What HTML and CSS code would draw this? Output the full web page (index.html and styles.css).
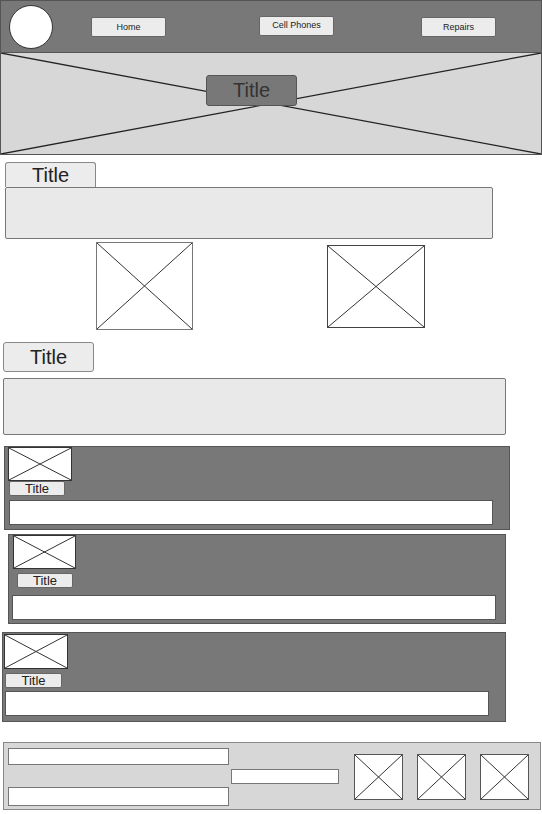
FILE: index.html
```html
<!DOCTYPE html>
<html lang="en">
<head>
    <meta charset="UTF-8">
    <meta name="viewport" content="width=device-width, initial-scale=1.0">
    <title>Phone Shop Wireframe</title>
    <link rel="stylesheet" href="styles.css">
</head>
<body>
    <header class="topbar">
        <div class="logo"></div>
        <a class="nav-btn nav-home">Home</a>
        <a class="nav-btn nav-phones">Cell Phones</a>
        <a class="nav-btn nav-repairs">Repairs</a>
    </header>

    <div class="hero">
        <svg class="cross" viewBox="0 0 100 100" preserveAspectRatio="none">
            <line x1="0" y1="0" x2="100" y2="100" vector-effect="non-scaling-stroke"/>
            <line x1="0" y1="100" x2="100" y2="0" vector-effect="non-scaling-stroke"/>
        </svg>
        <div class="hero-title">Title</div>
    </div>

    <section class="intro">
        <div class="tab">Title</div>
        <div class="panel panel-intro"></div>
        <div class="gallery">
            <div class="ph gallery-one">
                <svg viewBox="0 0 100 100" preserveAspectRatio="none"><line x1="0" y1="0" x2="100" y2="100" vector-effect="non-scaling-stroke"/><line x1="0" y1="100" x2="100" y2="0" vector-effect="non-scaling-stroke"/></svg>
            </div>
            <div class="ph gallery-two">
                <svg viewBox="0 0 100 100" preserveAspectRatio="none"><line x1="0" y1="0" x2="100" y2="100" vector-effect="non-scaling-stroke"/><line x1="0" y1="100" x2="100" y2="0" vector-effect="non-scaling-stroke"/></svg>
            </div>
        </div>
    </section>

    <section class="listing">
        <div class="title-btn">Title</div>
        <div class="panel panel-listing"></div>

        <div class="card card-one">
            <div class="ph card-img">
                <svg viewBox="0 0 100 100" preserveAspectRatio="none"><line x1="0" y1="0" x2="100" y2="100" vector-effect="non-scaling-stroke"/><line x1="0" y1="100" x2="100" y2="0" vector-effect="non-scaling-stroke"/></svg>
            </div>
            <div class="card-title">Title</div>
            <div class="card-text"></div>
        </div>

        <div class="card card-two">
            <div class="ph card-img">
                <svg viewBox="0 0 100 100" preserveAspectRatio="none"><line x1="0" y1="0" x2="100" y2="100" vector-effect="non-scaling-stroke"/><line x1="0" y1="100" x2="100" y2="0" vector-effect="non-scaling-stroke"/></svg>
            </div>
            <div class="card-title">Title</div>
            <div class="card-text"></div>
        </div>

        <div class="card card-three">
            <div class="ph card-img">
                <svg viewBox="0 0 100 100" preserveAspectRatio="none"><line x1="0" y1="0" x2="100" y2="100" vector-effect="non-scaling-stroke"/><line x1="0" y1="100" x2="100" y2="0" vector-effect="non-scaling-stroke"/></svg>
            </div>
            <div class="card-title">Title</div>
            <div class="card-text"></div>
        </div>
    </section>

    <footer class="footer">
        <div class="footer-fields">
            <div class="field field-top"></div>
            <div class="field field-bottom"></div>
        </div>
        <div class="field field-mid"></div>
        <div class="footer-icons">
            <div class="ph icon">
                <svg viewBox="0 0 100 100" preserveAspectRatio="none"><line x1="0" y1="0" x2="100" y2="100" vector-effect="non-scaling-stroke"/><line x1="0" y1="100" x2="100" y2="0" vector-effect="non-scaling-stroke"/></svg>
            </div>
            <div class="ph icon">
                <svg viewBox="0 0 100 100" preserveAspectRatio="none"><line x1="0" y1="0" x2="100" y2="100" vector-effect="non-scaling-stroke"/><line x1="0" y1="100" x2="100" y2="0" vector-effect="non-scaling-stroke"/></svg>
            </div>
            <div class="ph icon">
                <svg viewBox="0 0 100 100" preserveAspectRatio="none"><line x1="0" y1="0" x2="100" y2="100" vector-effect="non-scaling-stroke"/><line x1="0" y1="100" x2="100" y2="0" vector-effect="non-scaling-stroke"/></svg>
            </div>
        </div>
    </footer>
</body>
</html>
```

FILE: styles.css
```css
* {
    box-sizing: border-box;
}
body {
    margin: 0;
    width: 542px;
    font-family: "Liberation Sans", Arial, sans-serif;
    color: #222;
    background: #fff;
}

/* header */
.topbar {
    display: flex;
    align-items: flex-start;
    height: 53px;
    background: #787878;
    border: 1px solid #555;
}
.logo {
    width: 44px;
    height: 44px;
    margin: 4px 0 0 8px;
    border-radius: 50%;
    background: #fff;
    border: 1px solid #333;
}
.nav-btn {
    display: flex;
    align-items: center;
    justify-content: center;
    width: 75px;
    height: 20px;
    background: #ececec;
    border: 1px solid #666;
    border-radius: 2px;
    font-size: 9px;
    color: #222;
}
.nav-home {
    margin: 16px 0 0 38px;
}
.nav-phones {
    margin: 15px 0 0 93px;
    padding-bottom: 2px;
}
.nav-repairs {
    margin: 16px 0 0 87px;
}

/* hero */
.hero {
    position: relative;
    height: 102px;
    background: #d7d7d7;
    border: 1px solid #555;
    border-top: none;
    padding: 22px 0 0 205px;
}
.cross {
    position: absolute;
    top: 0;
    left: 0;
    width: 100%;
    height: 100%;
}
.cross line {
    stroke: #222;
    stroke-width: 1.3;
}
.hero-title {
    position: relative;
    width: 91px;
    height: 31px;
    background: #787878;
    border: 1px solid #555;
    border-radius: 3px;
    font-size: 20px;
    line-height: 29px;
    text-align: center;
    color: #333;
}

/* placeholders */
.ph {
    background: #fff;
    border: 1px solid #444;
}
.ph svg {
    display: block;
    width: 100%;
    height: 100%;
}
.ph line {
    stroke: #333;
    stroke-width: 1;
}

/* intro */
.intro {
    margin-top: 7px;
    padding-left: 5px;
}
.tab {
    width: 91px;
    height: 25px;
    background: #ececec;
    border: 1px solid #888;
    border-bottom: none;
    border-radius: 3px 3px 0 0;
    font-size: 20px;
    line-height: 25px;
    text-align: center;
}
.panel {
    background: #e9e9e9;
    border: 1px solid #777;
    border-radius: 2px;
}
.panel-intro {
    width: 488px;
    height: 52px;
}
.gallery {
    display: flex;
    align-items: flex-start;
}
.gallery-one {
    width: 97px;
    height: 88px;
    margin: 3px 0 0 91px;
    border-color: #777;
}
.gallery-two {
    width: 98px;
    height: 83px;
    margin: 6px 0 0 134px;
}

/* listing */
.listing {
    margin-top: 12px;
}
.title-btn {
    width: 91px;
    height: 30px;
    margin-left: 3px;
    background: #ececec;
    border: 1px solid #888;
    border-radius: 3px;
    font-size: 20px;
    line-height: 29px;
    text-align: center;
}
.panel-listing {
    width: 503px;
    height: 57px;
    margin: 6px 0 0 3px;
}
.card {
    background: #787878;
    border: 1px solid #555;
}
.card-img {
    width: 64px;
    height: 34px;
    border-color: #333;
}
.card-title {
    width: 56px;
    height: 15px;
    background: #ececec;
    border: 1px solid #666;
    border-radius: 2px;
    font-size: 13px;
    line-height: 14px;
    text-align: center;
}
.card-text {
    height: 25px;
    background: #fff;
    border: 1px solid #555;
}
.card-one {
    width: 506px;
    height: 84px;
    margin: 11px 0 0 4px;
    padding: 0 0 0 3px;
}
.card-one .card-title {
    margin: 0 0 0 1px;
}
.card-one .card-text {
    width: 484px;
    margin: 4px 0 0 1px;
}
.card-two {
    width: 498px;
    height: 90px;
    margin: 4px 0 0 8px;
    padding: 0 0 0 4px;
}
.card-two .card-img {
    width: 63px;
}
.card-two .card-title {
    margin: 4px 0 0 4px;
}
.card-two .card-text {
    width: 484px;
    margin: 7px 0 0 -1px;
}
.card-three {
    width: 504px;
    height: 90px;
    margin: 8px 0 0 2px;
    padding: 1px 0 0 1px;
}
.card-three .card-img {
    height: 35px;
}
.card-three .card-title {
    margin: 4px 0 0 1px;
    width: 57px;
}
.card-three .card-text {
    width: 484px;
    margin: 3px 0 0 1px;
}

/* footer */
.footer {
    display: flex;
    align-items: flex-start;
    width: 538px;
    height: 68px;
    margin: 20px 0 0 3px;
    padding-left: 4px;
    background: #d7d7d7;
    border: 1px solid #888;
}
.footer-fields {
    display: flex;
    flex-direction: column;
    justify-content: space-between;
    height: 100%;
    padding: 5px 0 3px;
}
.field {
    background: #fff;
    border: 1px solid #777;
}
.field-top {
    width: 221px;
    height: 17px;
}
.field-bottom {
    width: 221px;
    height: 19px;
}
.field-mid {
    width: 108px;
    height: 15px;
    margin: 26px 0 0 2px;
}
.footer-icons {
    display: flex;
    gap: 14px;
    margin: 11px 0 0 15px;
}
.icon {
    width: 49px;
    height: 46px;
    border-color: #555;
}
```
